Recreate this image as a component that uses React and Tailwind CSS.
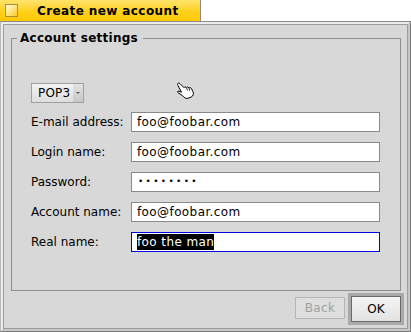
import React from 'react';

// Haiku-style "Create new account" dialog window

function HandCursor() {
  return (
    <svg
      width="19"
      height="18"
      viewBox="0 0 19 18"
      className="absolute left-[145px] top-[-1px]"
    >
      <path
        d="M1.5,2.5 C1.5,1 3,0.7 4,1.7 L8,5.7 C8.5,4.7 10,4.7 10.5,5.7 C11,4.7 12.5,4.7 13,6.2 C13.5,5.4 15,5.4 15.5,6.7 L17,9.7 C18,11.7 17,14.2 15,15.2 L12,16.2 C10.5,16.7 9,16.2 8,15.2 L6,13.2 L2,10.7 C1,10.2 1.5,8.7 3,9.2 L5.5,10.2 L2,3.5 Z"
        fill="#fff"
        stroke="#000"
        strokeWidth="1"
        strokeLinejoin="round"
      />
      <path d="M10.5,5.7 L11.5,8.5 M13,6.2 L13.8,8.8" stroke="#000" strokeWidth="0.8" fill="none" />
    </svg>
  );
}

function Field({ label, children, focused }) {
  return (
    <div className="flex items-center h-[20px]">
      <div className="w-[100px] leading-[20px]">{label}</div>
      <div
        className={
          focused
            ? 'w-[249px] h-[20px] border border-[#0000e0] bg-white pl-[5px] flex items-center tracking-[0.4px]'
            : 'w-[249px] h-[20px] border border-[#8a8a8a] bg-white pl-[5px] flex items-center tracking-[0.4px]'
        }
      >
        {children}
      </div>
    </div>
  );
}

export default function App() {
  return (
    <div className="w-[411px] h-[332px] bg-white flex flex-col font-['DejaVu_Sans',sans-serif] text-[12px] text-black">
      {/* Window tab */}
      <div className="w-[201px] h-[21px] flex items-center border-r border-[#8a8a8a] bg-gradient-to-b from-[#ffe46a] via-[#ffd21e] to-[#ffc800]">
        <div className="ml-[5px] w-[13px] h-[13px] border border-[#a8903e] bg-gradient-to-br from-[#fffbe0] via-[#ffe680] to-[#ffc800]" />
        <div className="ml-[19px] font-bold leading-[16px] tracking-[0.4px]">Create new account</div>
      </div>

      {/* Window frame */}
      <div className="flex-1 flex flex-col border border-t-[#8a8a8a] border-l-[#b8b8b8] border-r-[#7a7a7a] border-b-[#7a7a7a]">
        <div className="flex-1 flex flex-col border-2 border-t-[#ececec] border-l-[#ececec] border-r-[#c6c6c6] border-b-[#c6c6c6]">
          <div className="flex-1 flex flex-col border border-[#9c9c9c] bg-[#d8d8d8]">
            <fieldset className="mt-[5px] ml-[7px] w-[390px] h-[261px] border border-[#8e8e8e]">
              <legend className="ml-[5px] pl-[3px] pr-[5px] font-bold leading-[16px] tracking-[0.25px]">
                Account settings
              </legend>
              <div className="pt-[37px] pl-[19px] flex flex-col">
                <div className="relative h-[20px] mb-[9px]">
                  <div className="w-[53px] h-[20px] flex border border-[#a0a0a0] bg-gradient-to-b from-[#f2f2f2] to-[#dedede]">
                    <div className="w-[41px] pl-[6px] leading-[18px] tracking-[0.2px]">POP3</div>
                    <div className="flex-1 flex items-center justify-center bg-gradient-to-b from-[#e2e2e2] to-[#c8c8c8]">
                      <div className="w-0 h-0 border-l-[2px] border-r-[2px] border-t-[2px] border-l-transparent border-r-transparent border-t-[#555]" />
                    </div>
                  </div>
                  <HandCursor />
                </div>
                <div className="flex flex-col gap-[10px]">
                  <Field label="E-mail address:">foo@foobar.com</Field>
                  <Field label="Login name:">foo@foobar.com</Field>
                  <Field label="Password:">
                    <span className="ml-[1px] text-[9px] tracking-[2.3px]">••••••••</span>
                  </Field>
                  <Field label="Account name:">foo@foobar.com</Field>
                  <Field label="Real name:" focused>
                    <span className="bg-black text-white leading-[16px]">foo the man</span>
                  </Field>
                </div>
              </div>
            </fieldset>

            {/* Buttons */}
            <div className="flex justify-end items-start gap-[3px] mt-[2px] pr-[3px]">
              <button className="mt-[4px] w-[50px] h-[22px] border border-[#b6b6b6] bg-[#dedede] text-[#a0a0a0] leading-[20px] tracking-[0.3px]">
                Back
              </button>
              <div className="p-[3px] bg-[#a9a9a9]">
                <button className="w-[50px] h-[26px] border border-[#6a6a6a] bg-gradient-to-b from-[#f4f4f4] to-[#e2e2e2] leading-[24px]">
                  OK
                </button>
              </div>
            </div>
          </div>
        </div>
      </div>
    </div>
  );
}
